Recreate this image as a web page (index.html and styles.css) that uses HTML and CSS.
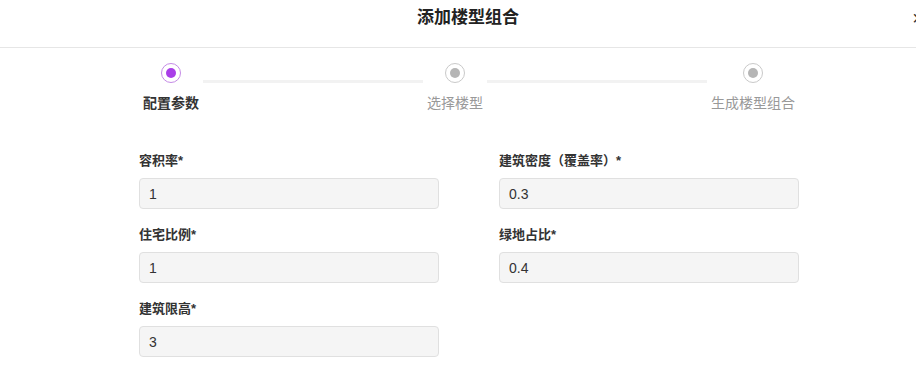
FILE: index.html
```html
<!DOCTYPE html>
<html lang="zh">
<head>
  <meta charset="UTF-8" />
  <meta name="viewport" content="width=device-width, initial-scale=1.0" />
  <title>添加楼型组合</title>
  <link rel="stylesheet" href="styles.css">
</head>
<body>
  <div class="modal">
    <header class="modal-header">
      <span></span>
      <h1 class="modal-title">添加楼型组合</h1>
      <button type="button" class="close-btn">×</button>
    </header>

    <div class="steps">
      <div class="step active">
        <span class="step-dot"></span>
        <span class="step-label">配置参数</span>
      </div>
      <div class="step-line"></div>
      <div class="step">
        <span class="step-dot"></span>
        <span class="step-label">选择楼型</span>
      </div>
      <div class="step-line"></div>
      <div class="step wide">
        <span class="step-dot"></span>
        <span class="step-label">生成楼型组合</span>
      </div>
    </div>

    <form class="params">
      <div class="field">
        <label>容积率*</label>
        <input type="text" value="1">
      </div>
      <div class="field">
        <label>建筑密度（覆盖率）*</label>
        <input type="text" value="0.3">
      </div>
      <div class="field">
        <label>住宅比例*</label>
        <input type="text" value="1">
      </div>
      <div class="field">
        <label>绿地占比*</label>
        <input type="text" value="0.4">
      </div>
      <div class="field">
        <label>建筑限高*</label>
        <input type="text" value="3">
      </div>
    </form>
  </div>
</body>
</html>
```

FILE: styles.css
```css
body {
  margin: 0;
  overflow: hidden;
  background: #fff;
  font-family: "Helvetica Neue", "Liberation Sans", "Noto Sans CJK SC", sans-serif;
  color: #333;
}
.modal {
  width: 936px;
}
.modal-header {
  display: grid;
  grid-template-columns: 1fr auto 1fr;
  align-items: start;
  height: 48px;
  box-sizing: border-box;
  padding: 8px 12px 0;
  border-bottom: 1px solid #e6e6e6;
}
.modal-title {
  margin: 0;
  font-size: 17px;
  line-height: 20px;
  font-weight: bold;
  color: #222;
}
.close-btn {
  justify-self: end;
  border: none;
  background: none;
  padding: 0;
  font-size: 20px;
  line-height: 20px;
  color: #333;
  cursor: pointer;
}

/* steps */
.steps {
  display: flex;
  align-items: flex-start;
  width: 652px;
  margin: 15px auto 0 143px;
}
.step {
  width: 56px;
  display: flex;
  flex-direction: column;
  align-items: center;
}
.step.wide {
  width: 84px;
}
.step-dot {
  width: 18px;
  height: 18px;
  border: 1px solid #c9c9c9;
  border-radius: 50%;
  display: flex;
  align-items: center;
  justify-content: center;
}
.step-dot::after {
  content: "";
  width: 10px;
  height: 10px;
  border-radius: 50%;
  background: #b5b5b5;
}
.step.active .step-dot {
  border-color: #c58be6;
}
.step.active .step-dot::after {
  background: #a93ee8;
}
.step-label {
  margin-top: 10px;
  font-size: 14px;
  line-height: 20px;
  color: #999;
  white-space: nowrap;
}
.step.active .step-label {
  color: #333;
  font-weight: bold;
}
.step-line {
  flex: 1;
  height: 3px;
  margin: 17px 4px 0;
  background: #f2f2f2;
}

/* form */
.params {
  display: grid;
  grid-template-columns: 300px 300px;
  column-gap: 60px;
  row-gap: 17px;
  margin: 39px 0 0 139px;
}
.field label {
  display: block;
  font-size: 13px;
  line-height: 18px;
  font-weight: bold;
  color: #333;
}
.field input {
  display: block;
  width: 100%;
  height: 31px;
  box-sizing: border-box;
  margin-top: 8px;
  padding: 0 9px;
  border: 1px solid #e0e0e0;
  border-radius: 4px;
  background: #f5f5f5;
  font-family: inherit;
  font-size: 14px;
  color: #333;
  outline: none;
}
```
